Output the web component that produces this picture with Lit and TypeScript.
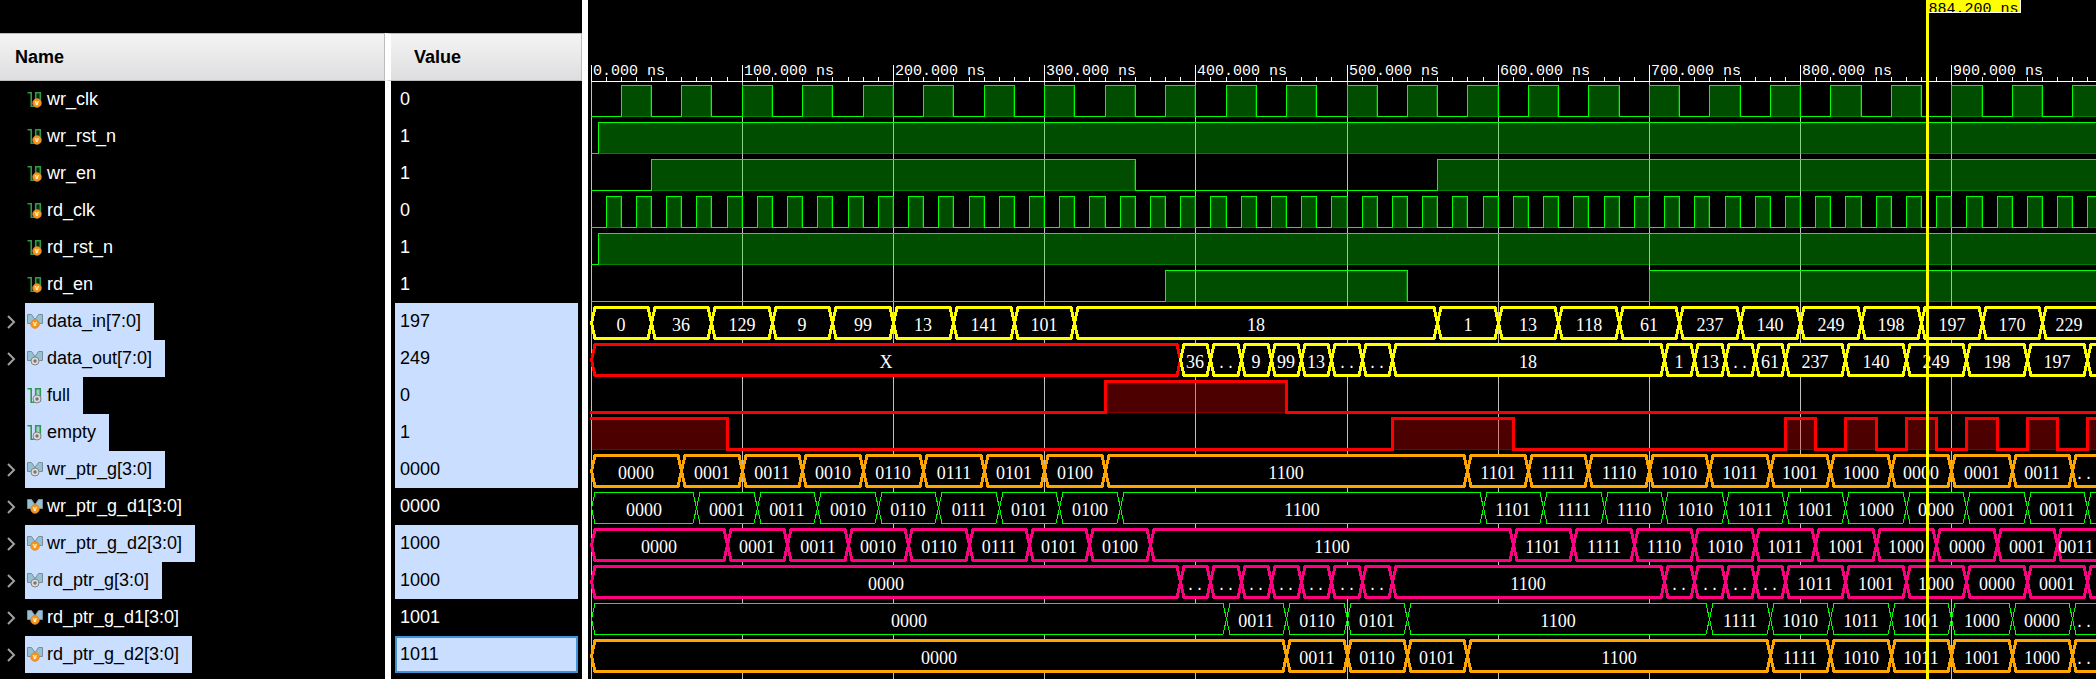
import { LitElement, html, svg, css, nothing } from "lit";
import { customElement, property, state } from "lit/decorators.js";
import { classMap } from "lit/directives/class-map.js";

type Segment = [end: number, label: string];

interface Signal {
  name: string;
  value: string;
  bus: boolean;
  driver: "var" | "net";
  selected?: boolean;
  focused?: boolean;
  color: string;
  thick?: boolean;
  highs?: [number, number][];
  cells?: Segment[];
  unknownUntil?: number;
}

const ROW = 37;
const HEADER = 81;
const SCALE = 1.512;
const ORIGIN = 3;
const FOREVER = 100000;
const LIMIT = 2000;

const GREEN = "#00ff00";
const YELLOW = "#ffff00";
const RED = "#ff0000";
const ORANGE = "#ffa500";
const PINK = "#ff0080";

const clock = (first: number, high: number, period: number): [number, number][] => {
  const out: [number, number][] = [];
  for (let t = first; t < LIMIT; t += period) out.push([t, t + high]);
  return out;
};

/* Consecutive cells of equal length, starting at a given time. */
const run = (start: number, step: number, labels: string): Segment[] =>
  labels.split(" ").map((label, i) => [start + step * (i + 1), label] as Segment);

const GRAY_UP = "0001 0011 0010 0110 0111 0101 0100";
const GRAY_DOWN = "1101 1111 1110 1010 1011 1001 1000 0000 0001 0011";

const SIGNALS: Signal[] = [
  { name: "wr_clk", value: "0", bus: false, driver: "var", color: GREEN, highs: clock(20, 20, 40) },
  { name: "wr_rst_n", value: "1", bus: false, driver: "var", color: GREEN, highs: [[5, FOREVER]] },
  { name: "wr_en", value: "1", bus: false, driver: "var", color: GREEN, highs: [[40, 360], [560, FOREVER]] },
  { name: "rd_clk", value: "0", bus: false, driver: "var", color: GREEN, highs: clock(10, 10, 20) },
  { name: "rd_rst_n", value: "1", bus: false, driver: "var", color: GREEN, highs: [[5, FOREVER]] },
  { name: "rd_en", value: "1", bus: false, driver: "var", color: GREEN, highs: [[380, 540], [700, FOREVER]] },
  {
    name: "data_in[7:0]", value: "197", bus: true, driver: "var", selected: true, color: YELLOW, thick: true,
    cells: [...run(0, 40, "0 36 129 9 99 13 141 101"), [560, "18"],
      ...run(560, 40, "1 13 118 61 237 140 249 198 197 170 229")],
  },
  {
    name: "data_out[7:0]", value: "249", bus: true, driver: "net", selected: true, color: YELLOW, thick: true,
    unknownUntil: 390,
    cells: [[390, "X"], ...run(390, 20, "36 .. 9 99 13 .. .."), [710, "18"],
      ...run(710, 20, "1 13 .. 61"), ...run(790, 40, "237 140 249 198 197"), [FOREVER, ""]],
  },
  { name: "full", value: "0", bus: false, driver: "net", selected: true, color: RED, thick: true, highs: [[340, 460]] },
  {
    name: "empty", value: "1", bus: false, driver: "net", selected: true, color: RED, thick: true,
    highs: [[0, 90], [530, 610], ...clock(790, 20, 40)],
  },
  {
    name: "wr_ptr_g[3:0]", value: "0000", bus: true, driver: "net", selected: true, color: ORANGE, thick: true,
    cells: [[60, "0000"], ...run(60, 40, GRAY_UP), [580, "1100"], ...run(580, 40, GRAY_DOWN), [FOREVER, ".."]],
  },
  {
    name: "wr_ptr_g_d1[3:0]", value: "0000", bus: true, driver: "var", color: GREEN,
    cells: [[70, "0000"], ...run(70, 40, GRAY_UP), [590, "1100"], ...run(590, 40, GRAY_DOWN), [FOREVER, ""]],
  },
  {
    name: "wr_ptr_g_d2[3:0]", value: "1000", bus: true, driver: "var", selected: true, color: PINK, thick: true,
    cells: [[90, "0000"], ...run(90, 40, GRAY_UP), [610, "1100"], ...run(610, 40, GRAY_DOWN)],
  },
  {
    name: "rd_ptr_g[3:0]", value: "1000", bus: true, driver: "net", selected: true, color: PINK, thick: true,
    cells: [[390, "0000"], ...run(390, 20, ".. .. .. .. .. .. .."), [710, "1100"],
      ...run(710, 20, ".. .. .. .."), ...run(790, 40, "1011 1001 1000 0000 0001"), [FOREVER, ""]],
  },
  {
    name: "rd_ptr_g_d1[3:0]", value: "1001", bus: true, driver: "var", color: GREEN,
    cells: [[420, "0000"], ...run(420, 40, "0011 0110 0101"), [740, "1100"],
      ...run(740, 40, "1111 1010 1011 1001 1000 0000"), [FOREVER, ".."]],
  },
  {
    name: "rd_ptr_g_d2[3:0]", value: "1011", bus: true, driver: "var", selected: true, focused: true, color: ORANGE, thick: true,
    cells: [[460, "0000"], ...run(460, 40, "0011 0110 0101"), [780, "1100"],
      ...run(780, 40, "1111 1010 1011 1001 1000"), [FOREVER, ".."]],
  },
];

@customElement("signal-icon")
class SignalIcon extends LitElement {
  @property({ type: Boolean }) bus = false;
  @property() driver = "var";

  static styles = css`
    :host { display: block; width: 16px; height: 16px; flex: none; }
    .icon { display: block; overflow: visible; }
    .bus { fill: #94c1d4; stroke: #7d8c96; }
    .wire { fill: none; stroke: #2f9a47; stroke-width: 1.6; }
    .pulse { fill: #2f9a47; fill-opacity: 0.25; }
    .var { fill: #f7941d; stroke: #d9822b; stroke-width: 0.6; }
    .net { fill: #dcdcdc; stroke: #858585; }
    .dot { fill: #747474; }
    .mark { fill: #ffffff; font: bold 7px "Liberation Sans", Arial, sans-serif; text-anchor: middle; }
  `;

  render() {
    const cx = this.bus ? 8 : 10;
    const cy = this.bus ? 10 : 11;
    return html`<svg class="icon" width="16" height="16" viewBox="0 0 16 16" aria-hidden="true">
      ${this.bus
        ? svg`<path class="bus" d="M0.5 0.5H4.5L7.6 5V9.5H0.5Z"/><path class="bus" d="M15.5 0.5H11.5L8.4 5V9.5H15.5Z"/>`
        : svg`<path class="pulse" d="M8.7 0.8H13.3V13H8.7Z"/><path class="wire" d="M0.5 0.8H4.2V14.2H8.7V0.8H13.3V14"/>`}
      ${this.driver === "var"
        ? svg`<circle class="var" cx=${cx} cy=${cy} r="4.4"/><text class="mark" x=${cx} y=${cy + 2}>v</text>`
        : svg`<circle class="net" cx=${cx} cy=${cy} r="4"/><circle class="dot" cx=${cx} cy=${cy} r="1.7"/>`}
    </svg>`;
  }
}

@customElement("signal-table")
class SignalTable extends LitElement {
  @property({ attribute: false }) signals: Signal[] = [];

  static styles = css`
    :host {
      display: flex;
      flex-direction: column;
      width: 582px;
      flex: none;
      padding-top: 33px;
      box-sizing: border-box;
      background: #000000;
      color: #ffffff;
      font: 18px "Liberation Sans", Arial, sans-serif;
    }
    .table { width: 100%; table-layout: fixed; border-collapse: separate; border-spacing: 0; }
    .name-col { width: 385px; }
    th {
      height: 48px;
      box-sizing: border-box;
      padding: 0 0 0 15px;
      text-align: left;
      color: #000000;
      background: linear-gradient(#f4f4f4, #dedee0) padding-box;
      border: 1px solid #bcbcbc;
      border-left: 0;
    }
    .value-head { padding-left: 23px; border-left: 6px solid #ffffff; }
    td { height: 37px; padding: 0; }
    .name { display: grid; grid-template-columns: 25px auto; justify-content: start; height: 37px; }
    .expander {
      grid-column: 1;
      display: flex;
      align-items: center;
      padding: 0 0 0 7px;
      border: 0;
      background: none;
    }
    .chevron { fill: none; stroke: #a0a0a0; stroke-width: 2; }
    .label {
      grid-column: 2;
      display: flex;
      align-items: center;
      gap: 4px;
      padding: 0 13px 0 2px;
      white-space: nowrap;
    }
    .value-cell { border-left: 6px solid #ffffff; padding: 0 4px; }
    .value { height: 37px; box-sizing: border-box; padding-left: 5px; line-height: 37px; }
    .selected { background: #cadeff; color: #000000; }
    .focused { border: 2px solid #3f93d8; padding-left: 3px; line-height: 33px; }
    .filler { flex: 1; display: grid; grid-template-columns: 385px 1fr; }
    .filler-value { border-left: 6px solid #ffffff; }
  `;

  render() {
    return html`
      <table class="table">
        <colgroup><col class="name-col" /><col /></colgroup>
        <thead>
          <tr><th scope="col">Name</th><th scope="col" class="value-head">Value</th></tr>
        </thead>
        <tbody>
          ${this.signals.map((s) => html`
            <tr>
              <td>
                <div class="name">
                  ${s.bus
                    ? html`<button class="expander" aria-label="Expand ${s.name}">
                        <svg class="chevron" width="9" height="14" viewBox="0 0 9 14"><path d="M1 1L7 7L1 13" /></svg>
                      </button>`
                    : nothing}
                  <span class=${classMap({ label: true, selected: !!s.selected })}>
                    <signal-icon ?bus=${s.bus} driver=${s.driver}></signal-icon>${s.name}
                  </span>
                </div>
              </td>
              <td class="value-cell">
                <div class=${classMap({ value: true, selected: !!s.selected, focused: !!s.focused })}>${s.value}</div>
              </td>
            </tr>`)}
        </tbody>
      </table>
      <div class="filler"><span></span><span class="filler-value"></span></div>
    `;
  }
}

@customElement("wave-view")
class WaveView extends LitElement {
  @property({ attribute: false }) signals: Signal[] = [];
  @property({ type: Number }) cursor = 0;
  @state() private span = 1508;

  private observer = new ResizeObserver(([entry]) => {
    this.span = Math.round(entry.contentRect.width);
  });

  static styles = css`
    :host { display: block; flex: 1; min-width: 0; overflow: hidden; background: #000000; }
    .canvas { display: block; width: 100%; height: 100%; }
    .crisp { shape-rendering: crispEdges; }
    .axis { stroke: #ffffff; fill: none; }
    .grid { stroke: #c0c0c0; }
    .wave { fill: none; }
    .thin { stroke-width: 1; }
    .thick { stroke-width: 3; }
    .high { fill-opacity: 0.3; stroke-opacity: 0.3; }
    .cell { fill: #000000; }
    .text { fill: #ffffff; font: 18px "Liberation Serif", "Times New Roman", serif; text-anchor: middle; }
    .time { fill: #ffffff; font: 15px "Liberation Mono", "Courier New", monospace; }
    .dots { fill: #ffffff; font: 15px "Liberation Mono", "Courier New", monospace; text-anchor: middle; }
    .cursor { fill: #ffff00; }
    .flag-edge { fill: none; stroke: #ffffff; }
    .cursor-time { fill: #000000; font: 15px "Liberation Mono", "Courier New", monospace; }
  `;

  connectedCallback() {
    super.connectedCallback();
    this.observer.observe(this);
  }

  disconnectedCallback() {
    this.observer.disconnect();
    super.disconnectedCallback();
  }

  /* Centre of the pixel column that a time falls in. */
  private x(t: number) {
    return ORIGIN + Math.floor(t * SCALE + 0.001) + 0.5;
  }

  private ruler() {
    const ticks = [];
    for (let t = 0; this.x(t) < this.span; t += 10) {
      const x = this.x(t);
      const major = t % 100 === 0;
      ticks.push(svg`<path class="axis crisp" d="M${x} ${major ? 65 : 77}V81"/>`);
      if (major) ticks.push(svg`<text class="time" x=${x + 1.5} y="75">${t.toFixed(3)} ns</text>`);
    }
    return svg`<path class="axis crisp" d="M${ORIGIN} 81.5H${this.span}"/>${ticks}`;
  }

  private grid() {
    const lines = [];
    for (let t = 0; this.x(t) < this.span; t += 100) {
      lines.push(svg`<line class="grid crisp" x1=${this.x(t)} x2=${this.x(t)} y1="82" y2="100%"/>`);
    }
    return lines;
  }

  private scalar(s: Signal, top: number) {
    const hi = top + 4.5;
    const lo = top + 35.5;
    const stop = this.span + 10;
    const fills = [];
    const starts = s.highs![0][0] === 0;
    let d = `M${s.thick ? ORIGIN - 1 : ORIGIN} ${starts ? hi : lo}`;
    for (const [from, to] of s.highs!) {
      const a = this.x(from);
      if (a > stop) break;
      const b = Math.min(this.x(to), stop);
      fills.push(svg`<rect class="high crisp" x=${a + 1} y=${hi + 1} width=${b - a - 2} height=${lo - hi - 1}
        fill=${s.color} stroke=${s.color}/>`);
      d += from === 0 ? `H${b}V${lo}` : `H${a}V${hi}H${b}V${lo}`;
      if (to === FOREVER) d = d.slice(0, d.lastIndexOf("V"));
    }
    d += `H${stop}`;
    return svg`${fills}<path class="wave crisp ${s.thick ? "thick" : "thin"}" stroke=${s.color} d=${d}/>`;
  }

  private bus(s: Signal, top: number) {
    const hi = top + 4.5;
    const lo = top + 35.5;
    const mid = top + 20;
    let start = 0;
    return s.cells!.map(([end, label]) => {
      const a = this.x(start);
      const b = this.x(Math.min(end, LIMIT));
      start = end;
      if (a > this.span) return nothing;
      const color = end <= (s.unknownUntil ?? 0) ? RED : s.color;
      const center = Math.floor((a + Math.min(b, this.span)) / 2);
      const dots = label === "..";
      return svg`
        <path class="cell crisp ${s.thick ? "thick" : "thin"}" stroke=${color}
          d="M${a} ${mid}L${a + 3.5} ${hi}H${b - 3.5}L${b} ${mid}L${b - 3.5} ${lo}H${a + 3.5}Z"/>
        <text class=${dots ? "dots" : "text"} x=${center} y=${top + 28}>${label}</text>`;
    });
  }

  private marker() {
    const x = this.x(this.cursor);
    return svg`
      <rect class="cursor" x=${x - 1.5} y="0" width="3" height="100%"/>
      <rect class="cursor" x=${x - 1.5} y="0" width="94" height="12"/>
      <svg x=${x} y="0" width="94" height="12"><text class="cursor-time" x="1" y="13">${this.cursor.toFixed(3)} ns</text></svg>
      <path class="flag-edge crisp" d="M${x + 1.5} 12.5H${x + 92.5}V0"/>`;
  }

  render() {
    const height = HEADER + ROW * this.signals.length;
    return html`<svg class="canvas" role="img" aria-label="Waveforms" style="min-height:${height}px">
      ${this.grid()} ${this.ruler()}
      ${this.signals.map((s, i) => {
        const top = HEADER + i * ROW;
        return s.highs ? this.scalar(s, top) : this.bus(s, top);
      })}
      ${this.marker()}
    </svg>`;
  }
}

@customElement("app-root")
class AppRoot extends LitElement {
  static styles = css`
    :host { display: flex; min-height: 100vh; gap: 6px; background: #ffffff; }
  `;

  render() {
    return html`
      <signal-table .signals=${SIGNALS}></signal-table>
      <wave-view .signals=${SIGNALS} .cursor=${884.2}></wave-view>
    `;
  }
}
